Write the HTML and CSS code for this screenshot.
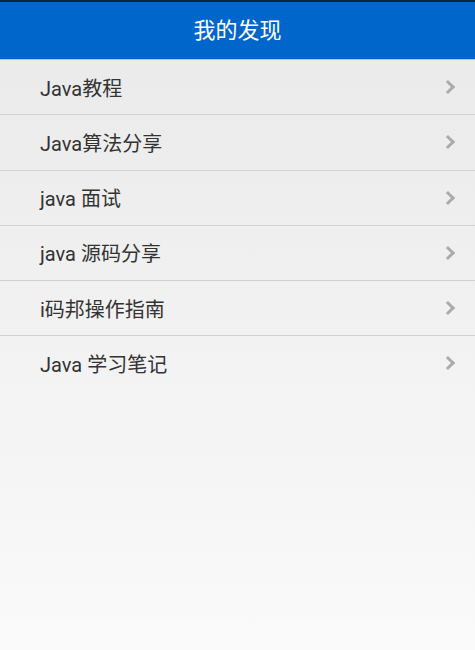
FILE: index.html
```html
<!DOCTYPE html>
<html lang="zh">
<head>
  <meta charset="UTF-8">
  <meta name="viewport" content="width=device-width, initial-scale=1.0">
  <title>我的发现</title>
  <link rel="stylesheet" href="styles.css">
</head>
<body>
  <div class="header">我的发现</div>
  <ul class="list">
    <li class="item"><span>Java教程</span><i class="arrow"></i></li>
    <li class="item"><span>Java算法分享</span><i class="arrow"></i></li>
    <li class="item"><span>java 面试</span><i class="arrow"></i></li>
    <li class="item"><span>java 源码分享</span><i class="arrow"></i></li>
    <li class="item"><span>i码邦操作指南</span><i class="arrow"></i></li>
    <li class="item"><span>Java 学习笔记</span><i class="arrow"></i></li>
  </ul>
</body>
</html>
```

FILE: styles.css
```css
html {
  height: 100%;
}

body {
  font-family: Roboto, "Noto Sans CJK SC", sans-serif;
  background: linear-gradient(#e9e9e9, #fafafa) fixed;
  min-height: 100%;
  color: #333;
  margin: 0;
  padding: 0;
}

.header {
  height: 57px;
  line-height: 57px;
  border-top: 2px solid #10243e;
  border-bottom: 1px solid #9ec6ee;
  background-color: #0066cc;
  color: #fff;
  font-size: 22px;
  text-align: center;
}

.list {
  list-style: none;
  margin: 0;
  padding: 0;
}

.item {
  display: flex;
  align-items: center;
  justify-content: space-between;
  height: 54.25px;
  padding: 0 22px 0 40px;
  border-bottom: 1px solid #d2d2d2;
  font-size: 20px;
}

.item:last-child {
  border-bottom: none;
}

.arrow {
  width: 7px;
  height: 7px;
  border-top: 3.5px solid #ababab;
  border-right: 3.5px solid #ababab;
  transform: rotate(45deg);
}
```
